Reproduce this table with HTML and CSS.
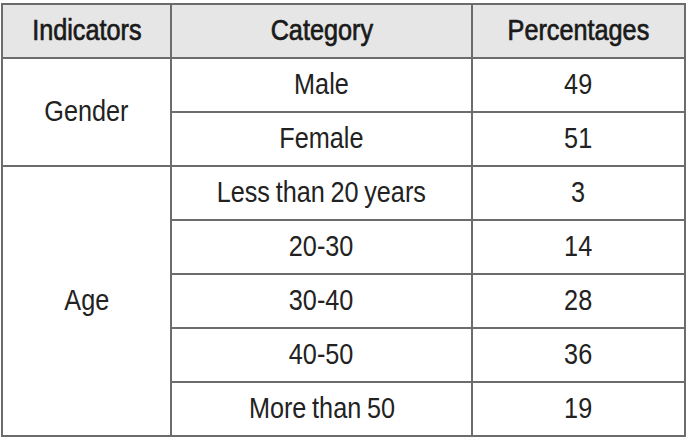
FILE: index.html
```html
<!DOCTYPE html>
<html lang="en">
<head>
<meta charset="utf-8">
<title>Indicators table</title>
<link rel="stylesheet" href="styles.css">
</head>
<body>
<table class="data">
  <colgroup>
    <col class="c1">
    <col class="c2">
    <col class="c3">
  </colgroup>
  <thead>
    <tr>
      <th><span class="t">Indicators</span></th>
      <th><span class="t">Category</span></th>
      <th><span class="t">Percentages</span></th>
    </tr>
  </thead>
  <tbody>
    <tr>
      <td rowspan="2"><span class="t">Gender</span></td>
      <td><span class="t">Male</span></td>
      <td><span class="t">49</span></td>
    </tr>
    <tr>
      <td><span class="t">Female</span></td>
      <td><span class="t">51</span></td>
    </tr>
    <tr>
      <td rowspan="5"><span class="t">Age</span></td>
      <td><span class="t">Less than 20 years</span></td>
      <td><span class="t">3</span></td>
    </tr>
    <tr>
      <td><span class="t">20-30</span></td>
      <td><span class="t">14</span></td>
    </tr>
    <tr>
      <td><span class="t">30-40</span></td>
      <td><span class="t">28</span></td>
    </tr>
    <tr>
      <td><span class="t">40-50</span></td>
      <td><span class="t">36</span></td>
    </tr>
    <tr>
      <td><span class="t">More than 50</span></td>
      <td><span class="t">19</span></td>
    </tr>
  </tbody>
</table>
</body>
</html>
```
FILE: styles.css
```css
html, body {
  margin: 0;
  padding: 0;
  background: #ffffff;
}
body {
  padding: 3px 0 0 1px;
}
.data {
  border-collapse: collapse;
  width: 683px;
  table-layout: fixed;
  font-family: "Liberation Sans", Arial, sans-serif;
  color: #222222;
}
.c1 { width: 169px; }
.c2 { width: 301px; }
.c3 { width: 213px; }
.data th,
.data td {
  border: 2px solid #6c6c6c;
  text-align: center;
  vertical-align: middle;
  padding: 0 0 3px 0;
  height: 49px;
  font-size: 29px;
  line-height: 32px;
  font-weight: normal;
  white-space: nowrap;
  word-spacing: -1.5px;
}
.t {
  display: inline-block;
  transform: scaleX(0.87);
  transform-origin: center;
}
.data th {
  background: #e6e6e6;
  color: #1a1a1a;
  -webkit-text-stroke: 0.7px #1a1a1a;
}
```
